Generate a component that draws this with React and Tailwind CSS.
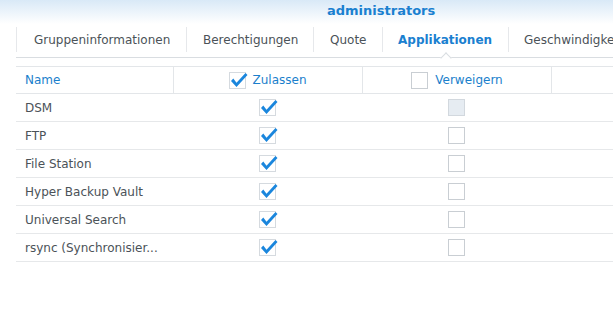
import React from "react";

function Box({ checked, disabled }) {
  return (
    <div
      className={`relative w-[17px] h-[17px] border ${
        disabled
          ? "bg-[#e6ecf2] border-[#d2d8de]"
          : checked
          ? "bg-white border-[#d5dadf]"
          : "bg-white border-[#c9ced3]"
      }`}
    >
      {checked && (
        <svg
          className="absolute left-[-1px] top-[-2px]"
          width="20"
          height="19"
          viewBox="0 0 20 19"
        >
          <path
            d="M2 10 L7.5 16 L18.5 4 L16.5 2 L7.5 11.8 L4.3 7.6 Z"
            fill="#1a86dd"
          />
        </svg>
      )}
    </div>
  );
}

const rows = [
  { name: "DSM", disabled: true },
  { name: "FTP" },
  { name: "File Station" },
  { name: "Hyper Backup Vault" },
  { name: "Universal Search" },
  { name: "rsync (Synchronisier..." },
];

export default function App() {
  return (
    <div
      className="w-[613px] h-[310px] overflow-hidden bg-white text-[12px] text-[#4b5258]"
      style={{ fontFamily: '"DejaVu Sans", Verdana, sans-serif' }}
    >
      <div className="h-[24px] bg-gradient-to-b from-[#d9e9f7] to-white pl-[327px] pt-[3px]">
        <span className="text-[13px] font-bold text-[#1a80d0] leading-[16px] block">
          administrators
        </span>
      </div>

      <div className="ml-[16px] pt-[3px] pb-[5px] border-b border-[#d9dde1] flex whitespace-nowrap">
        <div className="w-[170px] h-[25px] border-l border-[#e6e8eb] px-[17px] flex items-center">
          Gruppeninformationen
        </div>
        <div className="w-[127px] h-[25px] border-l border-[#e6e8eb] px-[16px] flex items-center">
          Berechtigungen
        </div>
        <div className="w-[69px] h-[25px] border-l border-[#e6e8eb] px-[16px] flex items-center">
          Quote
        </div>
        <div className="relative w-[126px] h-[25px] border-l border-[#e6e8eb] px-[15px] flex items-center font-bold text-[#1a80d0]">
          Applikationen
          <div className="absolute left-[59px] bottom-[-10px] w-[8px] h-[8px] bg-white border-l border-t border-[#d9dde1] rotate-45" />
        </div>
        <div className="flex-1 h-[25px] border-l border-[#e6e8eb] px-[15px] flex items-center overflow-hidden">
          Geschwindigkeitsbegrenzung
        </div>
      </div>

      <div className="ml-[16px] mt-[8px]">
        <div className="flex h-[28px] border-t border-b border-[#e3e6e9] text-[#1b7fcc]">
          <div className="w-[157px] pl-[9px] flex items-center">Name</div>
          <div className="w-[189px] border-l border-[#e3e6e9] flex items-center justify-center gap-[6px]">
            <Box checked />
            <span>Zulassen</span>
          </div>
          <div className="w-[189px] border-l border-[#e3e6e9] flex items-center justify-center gap-[7px]">
            <Box />
            <span>Verweigern</span>
          </div>
          <div className="flex-1 border-l border-[#e3e6e9]" />
        </div>
        {rows.map((r) => (
          <div key={r.name} className="flex h-[28px] border-b border-[#e6e8ea]">
            <div className="w-[157px] pl-[9px] flex items-center whitespace-nowrap">
              {r.name}
            </div>
            <div className="w-[189px] flex items-center justify-center">
              <Box checked />
            </div>
            <div className="w-[189px] flex items-center justify-center">
              <Box disabled={r.disabled} />
            </div>
            <div className="flex-1" />
          </div>
        ))}
      </div>
    </div>
  );
}
